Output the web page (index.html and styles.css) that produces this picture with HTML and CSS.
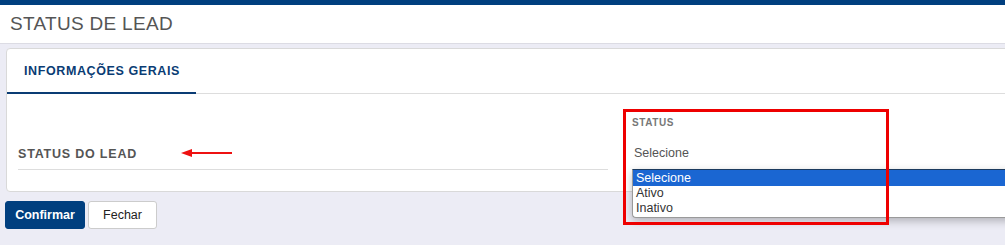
FILE: index.html
```html
<!DOCTYPE html>
<html lang="pt">
<head>
<meta charset="utf-8">
<link rel="stylesheet" href="styles.css">
</head>
<body>
<div class="topbar"></div>
<header class="page-header">
  <h1 class="page-title">STATUS DE LEAD</h1>
</header>
<main class="content">
  <section class="card">
    <nav class="tabs">
      <div class="tab active">INFORMAÇÕES GERAIS</div>
    </nav>
    <div class="form-row">
      <div class="field field-left">
        <div class="field-label-lg">STATUS DO LEAD</div>
        <svg class="arrow" width="52" height="8" viewBox="0 0 52 8">
          <path d="M0 4 L11 0 L11 3 L51 3 L51 5 L11 5 L11 8 Z" fill="#ee1111"/>
        </svg>
      </div>
      <div class="field field-right">
        <div class="field-label-sm">STATUS</div>
        <div class="select-value">Selecione</div>
        <ul class="dropdown">
          <li class="opt selected">Selecione</li>
          <li class="opt">Ativo</li>
          <li class="opt">Inativo</li>
        </ul>
        <div class="highlight-box"></div>
      </div>
    </div>
  </section>
  <div class="actions">
    <button class="btn btn-primary">Confirmar</button>
    <button class="btn btn-default">Fechar</button>
  </div>
</main>
</body>
</html>
```
FILE: styles.css
```css
html, body {
  margin: 0;
  padding: 0;
  overflow: hidden;
  width: 1005px;
  height: 245px;
  font-family: "Liberation Sans", Arial, sans-serif;
  background: #ececf5;
}
.topbar {
  height: 5px;
  background: #003f7f;
}
.page-header {
  height: 38px;
  background: #fff;
  border-bottom: 1px solid #dcdce4;
  display: flex;
  align-items: center;
  padding-left: 10px;
}
.page-title {
  margin: 0;
  font-weight: normal;
  font-size: 19px;
  color: #555;
  letter-spacing: 0.3px;
}
.content {
  padding: 4px 0 0 6px;
}
.card {
  width: 1030px;
  background: #fff;
  border: 1px solid #d9d9d9;
  border-radius: 4px;
  height: 144px;
  box-sizing: border-box;
}
.tabs {
  height: 44px;
  border-bottom: 1px solid #dddddd;
  display: flex;
}
.tab {
  width: 189px;
  box-sizing: border-box;
  padding-left: 17px;
  display: flex;
  align-items: center;
  font-size: 12.5px;
  font-weight: bold;
  color: #0a3c74;
  letter-spacing: 0.6px;
}
.tab.active {
  border-bottom: 2px solid #0a3c74;
  margin-bottom: -1px;
  padding-top: 1px;
}
.form-row {
  display: flex;
  gap: 24px;
  padding-left: 11px;
}
.field {
  position: relative;
}
.field-left {
  width: 590px;
  height: 75px;
  border-bottom: 1px solid #dddddd;
  display: flex;
  align-items: flex-end;
}
.field-label-lg {
  font-size: 12.5px;
  font-weight: bold;
  color: #555;
  letter-spacing: 0.8px;
  padding-bottom: 8px;
}
.arrow {
  position: absolute;
  left: 163px;
  top: 55px;
}
.field-right {
  width: 380px;
  padding-top: 23px;
}
.field-label-sm {
  font-size: 10px;
  font-weight: bold;
  color: #777;
  letter-spacing: 0.6px;
}
.select-value {
  margin-top: 18px;
  font-size: 12.5px;
  color: #555;
  padding-left: 2px;
}
.dropdown {
  position: absolute;
  left: 0;
  top: 75px;
  width: 400px;
  margin: 0;
  padding: 0 0 1px 0;
  list-style: none;
  background: #fff;
  border-top: 1px solid #1b3a5e;
  border-left: 1px solid #9a9a9a;
  border-bottom: 1px solid #9a9a9a;
  border-radius: 0 0 0 4px;
  box-shadow: 0 3px 8px rgba(0, 0, 0, 0.25);
}
.opt {
  font-size: 12.5px;
  line-height: 15px;
  height: 15px;
  color: #333;
  padding-left: 3px;
}
.opt.selected {
  background: #1a66d2;
  color: #fff;
  height: 16px;
  line-height: 16px;
}
.highlight-box {
  position: absolute;
  left: -9px;
  top: 15px;
  width: 260px;
  height: 110px;
  border: 3px solid #ee0000;
  pointer-events: none;
}
.actions {
  display: flex;
  gap: 3px;
  margin-top: 9px;
  margin-left: -1px;
}
.btn {
  height: 28px;
  font-family: "Liberation Sans", Arial, sans-serif;
  font-size: 12.5px;
  border-radius: 3px;
  padding: 0 8px;
  cursor: pointer;
}
.btn-primary {
  width: 80px;
  background: #003f7f;
  color: #fff;
  font-weight: bold;
  border: 1px solid #003f7f;
}
.btn-default {
  width: 69px;
  background: #fff;
  color: #222;
  border: 1px solid #cccccc;
}
```
